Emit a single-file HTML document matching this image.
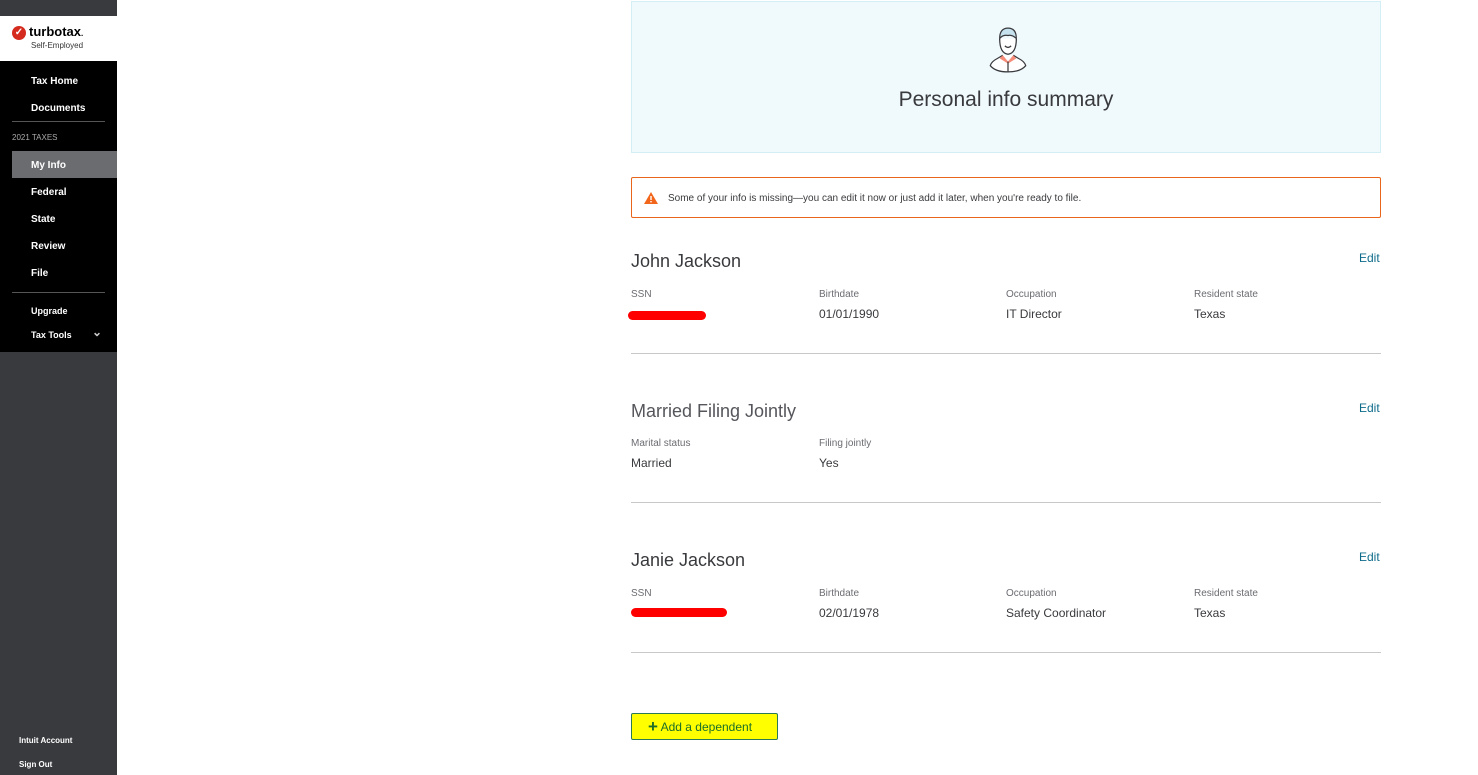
<!DOCTYPE html>
<html><head><meta charset="utf-8"><style>
*{margin:0;padding:0;box-sizing:border-box}
body{width:1478px;height:775px;overflow:hidden;background:#fff;font-family:"Liberation Sans",sans-serif;position:relative}
.sb{position:absolute;left:0;top:0;width:117px;height:775px;background:#393a3e}
.logo{position:absolute;top:16px;left:0;width:117px;height:45px;background:#fff}
.blk{position:absolute;top:61px;left:0;width:117px;height:291px;background:#000}
.n{position:absolute;left:31px;color:#fff;font-size:10px;font-weight:bold}
.hr{position:absolute;left:12px;width:93px;height:1px;background:#555}
.t{position:absolute;color:#333;}
.lab{position:absolute;font-size:10px;color:#6b6c72}
.val{position:absolute;font-size:12px;color:#393a3d}
.h{position:absolute;font-size:18px;color:#393a3d}
.edit{position:absolute;left:1359px;font-size:12px;color:#0d6b8a}
.line{position:absolute;left:631px;width:750px;height:1px;background:#c8c8c8}
.red{position:absolute;height:9px;background:#f00;border-radius:5px}
</style></head><body>
<div class="sb">
<div class="logo">
<div style="position:absolute;left:12px;top:10px;width:14px;height:14px;border-radius:50%;background:#d52b1e;color:#fff;font-size:10px;line-height:14px;text-align:center;font-weight:bold">✓</div>
<div style="position:absolute;left:29px;top:8px;font-size:13px;font-weight:bold;color:#000">turbotax<span style="font-size:8px">.</span></div>
<div style="position:absolute;left:31px;top:25px;font-size:8px;color:#333">Self-Employed</div>
</div>
<div class="blk">
<div class="n" style="top:15px">Tax Home</div>
<div class="n" style="top:42px">Documents</div>
<div class="hr" style="top:60px"></div>
<div style="position:absolute;left:12px;top:72px;font-size:8px;color:#aaa">2021 TAXES</div>
<div style="position:absolute;left:12px;top:90px;width:105px;height:27px;background:#6b6c70"></div>
<div class="n" style="top:99px">My Info</div>
<div class="n" style="top:126px">Federal</div>
<div class="n" style="top:153px">State</div>
<div class="n" style="top:180px">Review</div>
<div class="n" style="top:207px">File</div>
<div class="hr" style="top:231px"></div>
<div class="n" style="top:245px;font-size:9px">Upgrade</div>
<div class="n" style="top:269px;font-size:9px">Tax Tools</div>
<div style="position:absolute;left:92px;top:264px;color:#ccc;font-size:12px;font-weight:bold">⌄</div>
</div>
<div class="n" style="left:19px;top:736px;font-size:8px">Intuit Account</div>
<div class="n" style="left:19px;top:760px;font-size:8px">Sign Out</div>
</div>

<div style="position:absolute;left:631px;top:1px;width:750px;height:152px;background:#f0f9fc;border:1px solid #d3eef5"></div>
<svg style="position:absolute;left:986px;top:24px" width="44" height="50" viewBox="0 0 40 48">
<path d="M12 14 Q12 4 20 4 Q28 4 28 14 Q24 10 20 11 Q15 10 12 14Z" fill="#c6e2ee" stroke="#393a3d" stroke-width="1.2"/>
<path d="M12 14 Q12 28 20 29 Q28 28 28 14" fill="#fff" stroke="#393a3d" stroke-width="1.2"/>
<path d="M17 21 Q20 24 23 21" fill="none" stroke="#393a3d" stroke-width="1.2"/>
<path d="M15 30 L10 33 Q4 36 3 40 Q8 46 20 46 Q32 46 37 40 Q36 36 30 33 L25 30" fill="#fff" stroke="#393a3d" stroke-width="1.2"/>
<path d="M15 30 L20 36 L25 30 L28 33 L20 38 L12 33Z" fill="#f58d7a"/>
<path d="M20 36 V46" stroke="#393a3d" stroke-width="1.2"/>
</svg>
<div class="t" style="left:631px;width:750px;top:88px;text-align:center;font-size:21px;color:#393a3d">Personal info summary</div>

<div style="position:absolute;left:631px;top:177px;width:750px;height:41px;border:1px solid #e8651b;border-radius:2px"></div>
<svg style="position:absolute;left:644px;top:192px" width="14" height="12"><path d="M7 0 L14 12 H0Z" fill="#f2661b"/><rect x="6.3" y="4" width="1.4" height="4" fill="#fff"/><rect x="6.3" y="9" width="1.4" height="1.4" fill="#fff"/></svg>
<div class="t" style="left:668px;top:193px;font-size:10px;color:#393a3d">Some of your info is missing—you can edit it now or just add it later, when you're ready to file.</div>

<div class="h" style="left:631px;top:251px">John Jackson</div>
<div class="edit" style="top:251px">Edit</div>
<div class="lab" style="left:631px;top:289px">SSN</div>
<div class="red" style="left:628px;top:311px;width:78px"></div>
<div class="lab" style="left:819px;top:289px">Birthdate</div><div class="val" style="left:819px;top:307px">01/01/1990</div>
<div class="lab" style="left:1006px;top:289px">Occupation</div><div class="val" style="left:1006px;top:307px">IT Director</div>
<div class="lab" style="left:1194px;top:289px">Resident state</div><div class="val" style="left:1194px;top:307px">Texas</div>
<div class="line" style="top:353px"></div>

<div class="h" style="left:631px;top:401px;color:#55565b">Married Filing Jointly</div>
<div class="edit" style="top:401px">Edit</div>
<div class="lab" style="left:631px;top:438px">Marital status</div><div class="val" style="left:631px;top:456px">Married</div>
<div class="lab" style="left:819px;top:438px">Filing jointly</div><div class="val" style="left:819px;top:456px">Yes</div>
<div class="line" style="top:502px"></div>

<div class="h" style="left:631px;top:550px">Janie Jackson</div>
<div class="edit" style="top:550px">Edit</div>
<div class="lab" style="left:631px;top:588px">SSN</div>
<div class="red" style="left:631px;top:608px;width:96px"></div>
<div class="lab" style="left:819px;top:588px">Birthdate</div><div class="val" style="left:819px;top:606px">02/01/1978</div>
<div class="lab" style="left:1006px;top:588px">Occupation</div><div class="val" style="left:1006px;top:606px">Safety Coordinator</div>
<div class="lab" style="left:1194px;top:588px">Resident state</div><div class="val" style="left:1194px;top:606px">Texas</div>
<div class="line" style="top:652px"></div>

<div style="position:absolute;left:631px;top:713px;width:147px;height:27px;background:#ffff00;border:1px solid #2a7a55;border-radius:2px;font-size:12px;color:#1b6e2a;line-height:25px;padding-left:16px"><span style="font-size:17px;font-weight:bold;vertical-align:-1px">+</span> Add a dependent</div>
</body></html>
